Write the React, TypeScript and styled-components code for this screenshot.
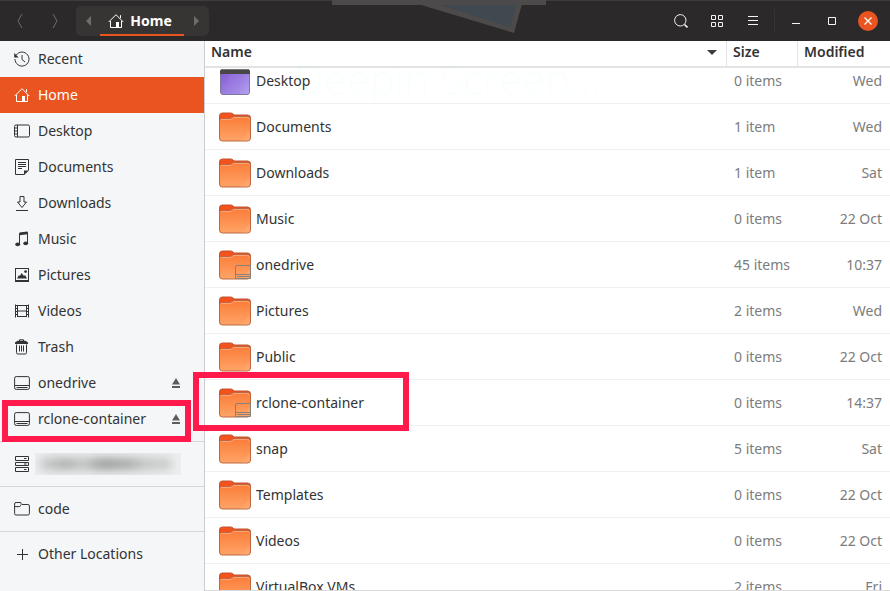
import React, { useLayoutEffect, useRef } from "react";
import styled, { createGlobalStyle, css } from "styled-components";

const Global = createGlobalStyle`
  *, *::before, *::after { box-sizing: border-box; }
  body { margin: 0; background: #fff; color: #333; font: 14px/20px "Noto Sans", "Open Sans", sans-serif; }
  button { font: inherit; color: inherit; background: none; border: 0; padding: 0; }
`;

const Window = styled.div`
  height: 100vh;
  display: flex;
  flex-direction: column;
  overflow: hidden;
`;

const TitleBar = styled.header`
  position: relative;
  flex: none;
  height: 41px;
  display: flex;
  align-items: center;
  padding: 0 12px 0 2px;
  background: #2b2929;
  border-top: 1px solid #3e3c3c;
  color: #fff;
`;

const BarButton = styled.button<{ $dim?: boolean; $width?: number }>`
  position: relative;
  width: ${(p) => p.$width ?? 36}px;
  height: 30px;
  display: grid;
  place-items: center;
  color: ${(p) => (p.$dim ? "#6f6d6c" : "#f4f4f4")};
`;

const PathBar = styled.nav`
  display: flex;
  height: 30px;
  margin-left: 4px;
  background: #373534;
  border-radius: 5px;
`;

const PathButton = styled.button`
  width: 84px;
  display: flex;
  align-items: center;
  justify-content: center;
  gap: 6px;
  font-weight: 700;
  border-bottom: 2px solid #e95420;
  padding: 2px 4px 0 0;
`;

const Spacer = styled.div`
  flex: 1;
`;

const Divider = styled.div`
  width: 1px;
  height: 24px;
  margin: 0 3px;
  background: #363434;
`;

const CloseButton = styled.button`
  width: 20px;
  height: 20px;
  margin-left: 8px;
  display: grid;
  place-items: center;
  border-radius: 50%;
  background: #e95420;
`;

const Backdrop = styled.svg`
  position: absolute;
  left: 332px;
  top: -1px;
`;

const Body = styled.div`
  position: relative;
  flex: 1;
  min-height: 0;
  display: flex;
`;

const Sidebar = styled.nav`
  flex: none;
  width: 205px;
  background: #f4f6f8;
  border-right: 1px solid #cdcdcd;
`;

const Place = styled.a<{ $active?: boolean }>`
  display: flex;
  align-items: center;
  gap: 8px;
  height: 36px;
  padding: 0 20px 0 14px;
  color: #333;
  text-decoration: none;
  white-space: nowrap;
  ${(p) => p.$active && css`background: #e95420; color: #fff;`}
`;

const PlaceIcon = styled.svg`
  flex: none;
  width: 16px;
  height: 16px;
  fill: none;
  stroke: currentColor;
`;

const PlaceRow = styled.div`
  display: grid;
  grid-template-columns: 1fr 33px;
  align-items: center;
`;

const Eject = styled.button`
  height: 36px;
  color: #5d5d5d;
`;

const Rule = styled.hr`
  height: 1px;
  margin: 4px 0;
  border: 0;
  background: #d5d7d9;
`;

const Redacted = styled.span`
  width: 146px;
  height: 22px;
  margin-left: -3px;
  overflow: hidden;
  background: #eceeef;
`;

const Smudge = styled.span`
  display: block;
  width: 134px;
  height: 12px;
  margin: 5px 4px;
  border-radius: 6px;
  background: linear-gradient(90deg, #ccc, #aaa 20%, #c4c4c4 32%, #999 48%, #aaa 68%, #c4c4c4 80%, #ccc);
  filter: blur(5px);
`;

const Files = styled.main`
  flex: 1;
  min-width: 0;
  overflow: auto;
  scrollbar-width: none;
  border-bottom: 1px solid #d9d9d9;
`;

const Table = styled.table`
  width: 100%;
  table-layout: fixed;
  border-collapse: separate;
  border-spacing: 0;
`;

const Head = styled.th<{ $width?: number }>`
  position: sticky;
  top: 0;
  z-index: 1;
  width: ${(p) => (p.$width ? `${p.$width}px` : "auto")};
  height: 27px;
  padding: 0 6px 3px;
  text-align: left;
  font-weight: 600;
  background: #fff;
  border-bottom: 2px solid #e3e3e3;
  & + & { border-left: 1px solid #e3e3e3; }
`;

const HeadLabel = styled.span`
  display: flex;
  align-items: center;
  justify-content: space-between;
  padding-right: 3px;
`;

const Cell = styled.td<{ $right?: boolean }>`
  height: 46px;
  padding: 0 8px;
  color: #7c7c7c;
  white-space: nowrap;
  text-align: ${(p) => (p.$right ? "right" : "left")};
  border-bottom: 1px solid #f0f0f0;
`;

const NameCell = styled(Cell)`
  padding: 0 14px;
  color: #333;
`;

const FileName = styled.span`
  display: flex;
  align-items: center;
  gap: 5px;
`;

const FileIcon = styled.svg`
  flex: none;
  width: 32px;
  height: 32px;
`;

const Marker = styled.div<{ $x: number; $y: number; $w: number; $h: number }>`
  position: absolute;
  z-index: 3;
  left: ${(p) => p.$x}px;
  top: ${(p) => p.$y}px;
  width: ${(p) => p.$w}px;
  height: ${(p) => p.$h}px;
  border: 6px solid #ff1a4b;
  pointer-events: none;
`;

const Ghost = styled.div`
  position: absolute;
  z-index: 2;
  left: 294px;
  top: 14px;
  font: 300 42px/48px "Open Sans", "Noto Sans", sans-serif;
  color: #f8fffc;
  mix-blend-mode: multiply;
  pointer-events: none;
`;

const drive = <><rect x=".6" y="1.6" width="14.8" height="12.8" rx="1.6" /><path d="M1 10.5h14M2.5 12.5h11" /></>;
const house = <><path d="M.7 9 8 1.7 15.3 9M2.5 8v6.5h11V8" /><path d="M12.5 5V2.2" /><path d="M8 9h3v5.5H8z" fill="currentColor" stroke="none" /></>;

const icons: Record<string, React.ReactNode> = {
  Recent: <><path d="M2.3 4A7 7 0 1 1 1 8M8 4v4.5l3 2.5" /><path d="M.2 2v4.5h4.5z" fill="currentColor" stroke="none" /></>,
  Home: house,
  Desktop: <><rect x=".5" y="2" width="15" height="12" rx="1.5" /><path d="M3.5 2v12M1 5h2M1 8h2M1 11h2" /></>,
  Documents: <><path d="M10.5 15.5h-9v-15h13v11M4 3.5h8M4 5.5h8M4 7.5h8M4 9.5h4" /><path d="M10 16v-4.5h5z" fill="currentColor" stroke="none" /></>,
  Downloads: <path d="M6 1.5h4V7h2.5L8 12.5 3.5 7H6zM2 15.5h12" />,
  Music: <><path d="M5.5 13V2.5l8-1V12" /><path d="M5.5 1.5l8-1v2.7l-8 1z" fill="currentColor" stroke="none" /><g fill="currentColor" stroke="none"><ellipse cx="3.7" cy="13.3" rx="2.4" ry="1.9" /><ellipse cx="11.7" cy="12.3" rx="2.4" ry="1.9" /></g></>,
  Pictures: <><rect x="1.5" y="1.5" width="13" height="12.5" /><path d="M1 14h14" strokeWidth="2" /><path d="M3 11.5 5 8l1 1 1.5-3L10 9l1-1 2 3.5z" fill="currentColor" stroke="none" /><circle cx="11.6" cy="4.6" r="1.4" fill="currentColor" stroke="none" /></>,
  Videos: <><path d="M1.5 1.5v13M14.5 1.5v13M3.5 2v12M12.5 2v12M3.5 2.5h9M3.5 8h9M3.5 13.5h9" /><path d="M2.5 2v12M13.5 2v12" strokeDasharray="1 2" /></>,
  Trash: <><path d="M2.5 5.5v8.2q0 1.3 1.3 1.3h7.4q1.3 0 1.3-1.3V5.5M5.5 6.5v6M7.5 6.5v6M9.5 6.5v6M5.5 2V.8h4V2" /><path d="M1 5V3.5L3.5 1.7h8L14 3.5V5z" fill="currentColor" stroke="none" /></>,
  onedrive: drive,
  "rclone-container": drive,
  Server: <path d="M1.5.5h13v4h-13zM1.5 6.5h13v3h-13zM1.5 11.5h13v4h-13zM10 2.5h2.5M10 8h2.5M10 13.5h2.5" />,
  code: <path d="M.6 12.5V3q0-1.5 1.5-1.5h4q1.2 0 1.2 1.2l.6.8h6q1.5 0 1.5 1.5v7.5q0 1.5-1.5 1.5h-12q-1.3 0-1.3-1.5M.8 5.6h4.5q1.2 0 1.2-1l.5-1.1" />,
  "Other Locations": <path d="M8.5 3v11M3 8.5h11" />,
};

function Icon({ name }: { name: string }) {
  return <PlaceIcon viewBox="0 0 16 16" aria-hidden="true">{icons[name]}</PlaceIcon>;
}

function PlaceLink({ name, active }: { name: string; active?: boolean }) {
  return <Place href="#" $active={active} aria-current={active ? "page" : undefined}><Icon name={name} />{name}</Place>;
}

function MountedPlace({ name }: { name: string }) {
  return (
    <PlaceRow>
      <PlaceLink name={name} />
      <Eject aria-label={`Eject ${name}`}>
        <EjectGlyph viewBox="0 0 10 10"><path d="M5 0 9 6.5H1zM1 8h8v2H1z" fill="currentColor" /></EjectGlyph>
      </Eject>
    </PlaceRow>
  );
}

const EjectGlyph = styled.svg`
  display: block;
  width: 10px;
  height: 10px;
`;

function Folder({ mounted }: { mounted: boolean }) {
  return (
    <FileIcon viewBox="0 0 32 32" aria-hidden="true">
      <defs>
        <linearGradient id="folder" x1="0" y1="0" x2="0" y2="1"><stop stopColor="#fb7c38" /><stop offset="1" stopColor="#ffa467" /></linearGradient>
      </defs>
      <path d="M.5 9V5q0-3 3-3h8q1.5 0 2.5 1l1 1h13.5q3 0 3 3v8H.5z" fill="#f4511c" stroke="#b95732" />
      <path d="M.5 9.5q0-2 2-2h8c2 0 2.5-2 5-2h13q3 0 3 3V27q0 3-3 3h-25q-3 0-3-3z" fill="url(#folder)" stroke="#bd6840" />
      <path d="M1.5 9.5q0-1 1-1h8.5c2 0 2.5-2 5-2h12.5q2 0 2 2" fill="none" stroke="#ffa273" />
      <path d="M31 20v7q0 2.5-2.5 2.5H22z" fill="#ffae78" opacity=".45" />
      {mounted && <path d="M31.5 16.5H18q-1.5 0-1.5 1.5v11.5h15zM16.5 25.5h15M18 27.5h13" fill="none" stroke="#87817a" />}
    </FileIcon>
  );
}

function DesktopIcon() {
  return (
    <FileIcon viewBox="0 0 32 32" aria-hidden="true">
      <defs><linearGradient id="desk" x2="1" y2="1"><stop stopColor="#8054d1" /><stop offset="1" stopColor="#b5a3ef" /></linearGradient></defs>
      <rect x="1.5" y="4.5" width="29" height="25" rx="2.5" fill="url(#desk)" stroke="#80779d" />
      <path d="M11 9h10v20H11z" fill="#9d7ee4" opacity=".3" />
      <path d="M1 9V7q0-3 3-3h24q3 0 3 3v2z" fill="#474747" />
      <path d="M3 4.5h26" stroke="#777" />
    </FileIcon>
  );
}

const files = [
  ["Desktop", "0 items", "Wed"],
  ["Documents", "1 item", "Wed"],
  ["Downloads", "1 item", "Sat"],
  ["Music", "0 items", "22 Oct"],
  ["onedrive", "45 items", "10:37"],
  ["Pictures", "2 items", "Wed"],
  ["Public", "0 items", "22 Oct"],
  ["rclone-container", "0 items", "14:37"],
  ["snap", "5 items", "Sat"],
  ["Templates", "0 items", "22 Oct"],
  ["Videos", "0 items", "22 Oct"],
  ["VirtualBox VMs", "2 items", "Fri"],
];

export default function App() {
  const list = useRef<HTMLElement>(null);
  useLayoutEffect(() => {
    if (list.current) list.current.scrollTop = 10;
  }, []);

  return (
    <Window>
      <Global />
      <TitleBar>
        <Backdrop width="214" height="34" viewBox="0 0 214 34" aria-hidden="true">
          <path d="M0 0h214v5H0z" fill="#4c4a4a" />
          <path d="M86 4h104l-8 29z" fill="#4c4a4a" />
          <path d="M108 5h76l-6 22z" fill="#404850" />
        </Backdrop>
        <BarButton $dim aria-label="Back"><svg width="6" height="16" viewBox="0 0 6 16" fill="none" stroke="currentColor"><path d="M5 1 1 8l4 7" /></svg></BarButton>
        <BarButton $dim $width={34} aria-label="Forward"><svg width="6" height="16" viewBox="0 0 6 16" fill="none" stroke="currentColor"><path d="m1 1 4 7-4 7" /></svg></BarButton>
        <PathBar aria-label="Path">
          <BarButton $dim $width={24} aria-label="Scroll path left"><svg width="5" height="10"><path d="M5 0v10L0 5z" fill="currentColor" /></svg></BarButton>
          <PathButton><Icon name="Home" />Home</PathButton>
          <BarButton $dim $width={25} aria-label="Scroll path right"><svg width="5" height="10"><path d="M0 0v10l5-5z" fill="currentColor" /></svg></BarButton>
        </PathBar>
        <Spacer />
        <BarButton aria-label="Search"><svg width="14" height="14" viewBox="0 0 14 14" fill="none" stroke="currentColor"><circle cx="6.3" cy="6.3" r="5.7" /><path d="m10.5 10.5 3 3" strokeWidth="1.6" /></svg></BarButton>
        <BarButton aria-label="Icon view"><svg width="12" height="12" viewBox="0 0 12 12" fill="none" stroke="currentColor"><path d="M.5.5h4v4h-4zM7.5.5h4v4h-4zM.5 7.5h4v4h-4zM7.5 7.5h4v4h-4z" /></svg></BarButton>
        <BarButton aria-label="Menu"><svg width="10" height="10" viewBox="0 0 10 10" stroke="currentColor"><path d="M0 .5h10M0 4.5h10M0 8.5h10" /></svg></BarButton>
        <Divider />
        <BarButton aria-label="Minimise"><svg width="8" height="8" viewBox="0 0 8 8" stroke="currentColor"><path d="M0 6.5h8" /></svg></BarButton>
        <BarButton aria-label="Maximise"><svg width="8" height="8" viewBox="0 0 8 8" fill="none" stroke="currentColor"><path d="M.5.5h7v7h-7z" /></svg></BarButton>
        <CloseButton aria-label="Close"><svg width="8" height="8" viewBox="0 0 8 8" stroke="currentColor"><path d="m.5.5 7 7m0-7-7 7" strokeWidth="1.2" /></svg></CloseButton>
      </TitleBar>
      <Body>
        <Sidebar aria-label="Places">
          {["Recent", "Home", "Desktop", "Documents", "Downloads", "Music", "Pictures", "Videos", "Trash"].map((n) => (
            <PlaceLink key={n} name={n} active={n === "Home"} />
          ))}
          <MountedPlace name="onedrive" />
          <MountedPlace name="rclone-container" />
          <Rule />
          <Place href="#" aria-label="Network server"><Icon name="Server" /><Redacted><Smudge /></Redacted></Place>
          <Rule />
          <PlaceLink name="code" />
          <Rule />
          <PlaceLink name="Other Locations" />
        </Sidebar>
        <Files ref={list}>
          <Table>
            <thead>
              <tr>
                <Head><HeadLabel>Name<svg width="10" height="5"><path d="M0 0h10L5 5z" fill="#3d3d3d" /></svg></HeadLabel></Head>
                <Head $width={71}>Size</Head>
                <Head $width={93}>Modified</Head>
              </tr>
            </thead>
            <tbody>
              {files.map(([name, size, modified]) => (
                <tr key={name}>
                  <NameCell>
                    <FileName>
                      {name === "Desktop" ? <DesktopIcon /> : <Folder mounted={name === "onedrive" || name === "rclone-container"} />}
                      {name}
                    </FileName>
                  </NameCell>
                  <Cell>{size}</Cell>
                  <Cell $right>{modified}</Cell>
                </tr>
              ))}
            </tbody>
          </Table>
        </Files>
        <Ghost aria-hidden="true">Deepin Screen...</Ghost>
        <Marker $x={2} $y={359} $w={189} $h={42} />
        <Marker $x={193} $y={331} $w={216} $h={59} />
      </Body>
    </Window>
  );
}
